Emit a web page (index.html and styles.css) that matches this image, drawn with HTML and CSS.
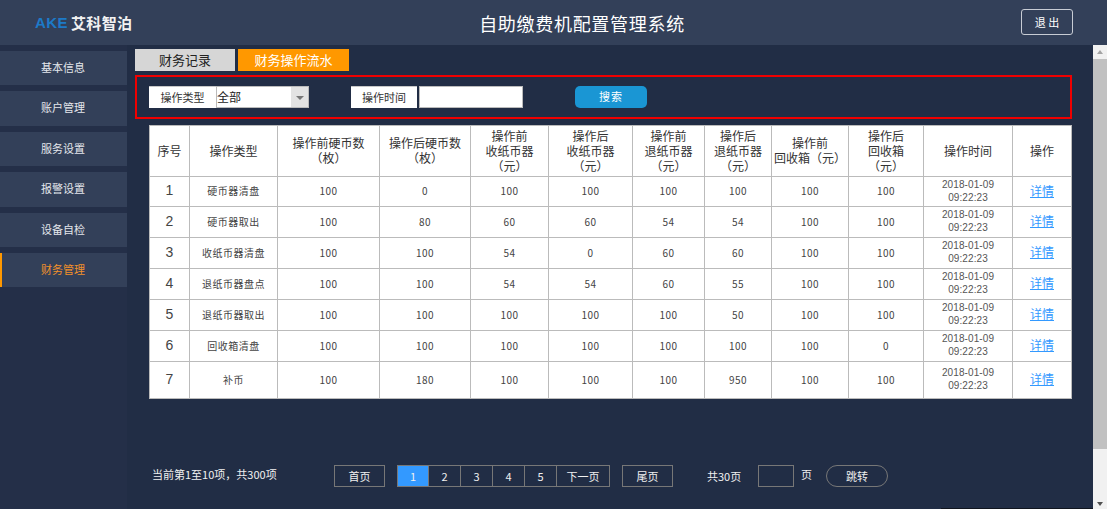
FILE: index.html
```html
<!DOCTYPE html>
<html>
<head>
    <meta charset="UTF-8">
    <title>自助缴费机配置管理系统</title>
    <link rel="stylesheet" href="styles.css">
</head>
<body>
    <div class="app">
        <header class="top">
            <div class="logo"><span class="logo-en">AKE</span><span class="logo-cn">艾科智泊</span></div>
            <h1 class="title">自助缴费机配置管理系统</h1>
            <a class="logout">退 出</a>
        </header>
        <div class="wrap">
            <nav class="side">
                <a class="side-item">基本信息</a>
                <a class="side-item">账户管理</a>
                <a class="side-item">服务设置</a>
                <a class="side-item">报警设置</a>
                <a class="side-item">设备自检</a>
                <a class="side-item active">财务管理</a>
            </nav>
            <main class="main">
                <div class="tabs">
                    <a class="tab">财务记录</a>
                    <a class="tab tab-on">财务操作流水</a>
                </div>
                <div class="filter">
                    <span class="f-label">操作类型</span>
                    <div class="f-select">
                        <span class="f-value">全部</span>
                        <span class="f-arrow"><i></i></span>
                    </div>
                    <span class="f-label f-label2">操作时间</span>
                    <div class="f-input"></div>
                    <a class="f-btn">搜索</a>
                </div>
                <table class="grid">
                    <colgroup>
                        <col class="c1"><col class="c2"><col class="c3"><col class="c4">
                        <col class="c5"><col class="c6"><col class="c7"><col class="c8">
                        <col class="c9"><col class="c10"><col class="c11"><col class="c12">
                    </colgroup>
                    <thead>
                        <tr>
                            <th>序号</th>
                            <th>操作类型</th>
                            <th>操作前硬币数<br>（枚）</th>
                            <th>操作后硬币数<br>（枚）</th>
                            <th>操作前<br>收纸币器<br>（元）</th>
                            <th>操作后<br>收纸币器<br>（元）</th>
                            <th>操作前<br>退纸币器<br>（元）</th>
                            <th>操作后<br>退纸币器<br>（元）</th>
                            <th>操作前<br>回收箱（元）</th>
                            <th>操作后<br>回收箱<br>（元）</th>
                            <th>操作时间</th>
                            <th>操作</th>
                        </tr>
                    </thead>
                    <tbody id="rows"></tbody>
                </table>
                <div class="pager">
                    <span class="pg-info">当前第1至10项，共300项</span>
                    <a class="pg pg-first">首页</a>
                    <div class="pg-nums">
                        <a class="pg-num on">1</a>
                        <a class="pg-num">2</a>
                        <a class="pg-num">3</a>
                        <a class="pg-num">4</a>
                        <a class="pg-num">5</a>
                        <a class="pg-num pg-next">下一页</a>
                    </div>
                    <a class="pg pg-last">尾页</a>
                    <span class="pg-total">共30页</span>
                    <div class="pg-box"></div>
                    <span class="pg-unit">页</span>
                    <a class="pg-go">跳转</a>
                </div>
            </main>
            <div class="scroll">
                <i class="up"></i>
                <div class="thumb"></div>
                <i class="down"></i>
            </div>
        </div>
        <div class="edge"></div>
    </div>

    <script>
        // 表格数据
        var data = [
            ['硬币器清盘', 100, 0, 100, 100, 100, 100, 100, 100],
            ['硬币器取出', 100, 80, 60, 60, 54, 54, 100, 100],
            ['收纸币器清盘', 100, 100, 54, 0, 60, 60, 100, 100],
            ['退纸币器盘点', 100, 100, 54, 54, 60, 55, 100, 100],
            ['退纸币器取出', 100, 100, 100, 100, 100, 50, 100, 100],
            ['回收箱清盘', 100, 100, 100, 100, 100, 100, 100, 0],
            ['补币', 100, 180, 100, 100, 100, 950, 100, 100]
        ];
        var tbody = document.getElementById('rows');
        data.forEach(function(item, i) {
            var row = document.createElement('tr');
            if (i === 6) row.className = 'tall';
            var html = '<td class="num">' + (i + 1) + '</td>';
            item.forEach(function(v) {
                html += '<td>' + v + '</td>';
            });
            html += '<td class="date">2018-01-09<br>09:22:23</td>';
            html += '<td><a class="detail">详情</a></td>';
            row.innerHTML = html;
            tbody.appendChild(row);
        });
    </script>
</body>
</html>
```

FILE: styles.css
```css
:root {
    --bg-dark: #212d45;
    --bg-bar: #334059;
    --line: #bbbbbb;
    --orange: #ff9800;
}

* {
    box-sizing: border-box;
}

html, body {
    margin: 0;
    padding: 0;
    background-color: #fff;
    overflow: hidden;
}

body {
    font-family: "Noto Sans CJK SC", "Liberation Sans", sans-serif;
    font-size: 12px;
}

.app {
    position: relative;
    width: 1107px;
    height: 509px;
    display: flex;
    flex-direction: column;
    background-color: var(--bg-dark);
}

.edge {
    position: absolute;
    right: 14px;
    bottom: 0;
    width: 152px;
    height: 1px;
    background-color: #10151f;
}

.top {
    height: 45px;
    flex: none;
    display: flex;
    align-items: center;
    padding: 0 34px 0 35px;
    background-color: var(--bg-bar);
}

.logo {
    width: 97px;
    display: flex;
    align-items: center;
    font-weight: bold;
    line-height: 20px;
}

.logo-en {
    font-family: "Liberation Sans", sans-serif;
    font-size: 15px;
    letter-spacing: 0.4px;
    color: #1d7ac8;
    margin-right: 3px;
}

.logo-cn {
    font-size: 15px;
    letter-spacing: 0.4px;
    color: #f2f2f2;
    white-space: nowrap;
}

.title {
    flex: 1;
    margin: 0;
    padding-left: 11px;
    text-align: center;
    font-size: 18px;
    font-weight: normal;
    letter-spacing: 0.7px;
    color: #fff;
}

.logout {
    width: 52px;
    height: 26px;
    margin-top: -1px;
    border: 1px solid #c8ccd4;
    border-radius: 3px;
    text-align: center;
    line-height: 24px;
    color: #fff;
    font-size: 11px;
}

.wrap {
    flex: 1;
    display: flex;
    min-height: 0;
}

.side {
    width: 127px;
    flex: none;
    padding-top: 6px;
    display: flex;
    flex-direction: column;
    gap: 6px;
    background-color: #242f48;
}

.side-item {
    height: 34.4px;
    text-align: center;
    line-height: 32px;
    padding-right: 1px;
    color: #e4e7ec;
    font-size: 11px;
    background-color: var(--bg-bar);
}

.side-item.active {
    color: #f2902a;
    border-left: 2px solid var(--orange);
    padding-right: 3px;
}

.main {
    flex: 1;
    min-width: 0;
    padding: 4px 21px 0 8px;
}

.tabs {
    display: flex;
    gap: 3px;
    height: 22px;
}

.tab {
    width: 100px;
    text-align: center;
    line-height: 22px;
    font-size: 13px;
    color: #222;
    background-color: #d6d6d6;
}

.tab-on {
    width: 111px;
    color: #fff;
    background-color: var(--orange);
}

.filter {
    height: 44px;
    margin-top: 4px;
    padding-left: 12px;
    display: flex;
    align-items: center;
    border: 2px solid #f00000;
}

.f-label {
    width: 67px;
    height: 22px;
    text-align: center;
    line-height: 21px;
    color: #333;
    font-size: 11px;
    background-color: #fff;
    border-top: 1px solid #c8c8c8;
}

.f-label2 {
    width: 66px;
    margin-left: 42px;
}

.f-select {
    width: 93px;
    height: 22px;
    display: flex;
    border: 1px solid #bbb;
    background-color: #fff;
}

.f-value {
    flex: 1;
    line-height: 19px;
    color: #222;
    font-size: 12px;
}

.f-arrow {
    width: 17px;
    display: flex;
    align-items: center;
    justify-content: center;
    background-color: #e3e3e3;
}

.f-arrow i {
    width: 0;
    height: 0;
    margin-top: 2px;
    border-left: 4px solid transparent;
    border-right: 4px solid transparent;
    border-top: 4px solid #777;
}

.f-input {
    width: 104px;
    height: 22px;
    margin-left: 2px;
    border: 1px solid #bbb;
    background-color: #fff;
}

.f-btn {
    width: 72px;
    height: 22px;
    margin-left: 52px;
    border-radius: 5px;
    text-align: center;
    line-height: 21px;
    letter-spacing: 1px;
    color: #fff;
    font-size: 11px;
    background-color: #1a96d4;
}

.grid {
    width: 922px;
    margin: 6px 0 0 14px;
    table-layout: fixed;
    border-collapse: collapse;
    background-color: #fff;
}

.c1 { width: 40px; }
.c2 { width: 88px; }
.c3 { width: 102px; }
.c4 { width: 91px; }
.c5 { width: 78px; }
.c6 { width: 84px; }
.c7 { width: 72px; }
.c8 { width: 67px; }
.c9 { width: 77px; }
.c10 { width: 75px; }
.c11 { width: 89px; }
.c12 { width: 59px; }

.grid th, .grid td {
    padding: 0;
    border: 1px solid var(--line);
    text-align: center;
    color: #333;
}

.grid th {
    height: 51px;
    padding-bottom: 2px;
    font-size: 12px;
    font-weight: normal;
    line-height: 15px;
}

.grid td {
    height: 31px;
    padding-bottom: 2px;
    font-size: 10px;
    letter-spacing: 0.5px;
    line-height: 13px;
    color: #444;
}

.grid tr:first-child td {
    height: 30px;
}

.grid tr.tall td {
    height: 37px;
}

.grid td.num {
    font-size: 14px;
    font-family: "Liberation Sans", sans-serif;
    letter-spacing: 0;
}

.grid td.date {
    font-family: "Liberation Sans", sans-serif;
    font-size: 10px;
    letter-spacing: 0.1px;
    color: #555;
}

.detail {
    font-size: 12px;
    letter-spacing: 0;
    color: #3399ff;
    text-decoration: underline;
}

.pager {
    height: 22px;
    margin-top: 66px;
    display: flex;
    align-items: center;
    color: #f0f0f0;
}

.pg-info {
    width: 199px;
    padding-left: 17px;
    margin-top: -4px;
    font-size: 11px;
    white-space: nowrap;
}

.pg {
    width: 51px;
    height: 22px;
    border: 1px solid #777;
    text-align: center;
    line-height: 20px;
    font-size: 11px;
}

.pg-nums {
    display: flex;
    margin-left: 12px;
}

.pg-num {
    width: 32px;
    height: 22px;
    border: 1px solid #777;
    border-left: 0;
    text-align: center;
    line-height: 20px;
    font-size: 11px;
}

.pg-num:first-child {
    border-left: 1px solid #777;
}

.pg-num.on {
    background-color: #3399ff;
}

.pg-next {
    width: 53px;
}

.pg-last {
    margin-left: 12px;
}

.pg-total {
    margin-left: 34px;
    width: 51px;
    font-size: 11px;
}

.pg-box {
    width: 36px;
    height: 22px;
    border: 1px solid #777;
}

.pg-unit {
    margin: -4px 0 0 7px;
    width: 25px;
    font-size: 11px;
}

.pg-go {
    width: 62px;
    height: 22px;
    border: 1px solid #777;
    border-radius: 11px;
    text-align: center;
    line-height: 20px;
    font-size: 11px;
}

.scroll {
    width: 14px;
    flex: none;
    display: flex;
    flex-direction: column;
    align-items: center;
    background-color: #f1f1f1;
}

.scroll .thumb {
    width: 14px;
    height: 390px;
    margin-top: 5px;
    background-color: #c1c1c1;
}

.scroll .up {
    width: 0;
    height: 0;
    margin-top: 5px;
    border-left: 3px solid transparent;
    border-right: 3px solid transparent;
    border-bottom: 4px solid #a3a3a3;
}

.scroll .down {
    width: 0;
    height: 0;
    margin-top: auto;
    margin-bottom: 3px;
    border-left: 3px solid transparent;
    border-right: 3px solid transparent;
    border-top: 4px solid #505050;
}
```
